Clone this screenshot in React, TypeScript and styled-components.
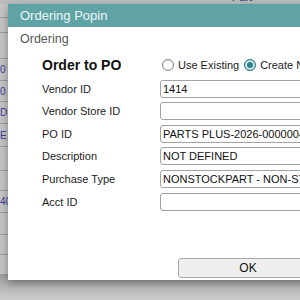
import React from "react";
import styled, { createGlobalStyle } from "styled-components";

const GlobalStyle = createGlobalStyle`
  html, body {
    margin: 0;
    padding: 0;
    overflow: hidden;
    font-family: "Liberation Sans", Arial, sans-serif;
  }
`;

const Page = styled.div`
  position: relative;
  width: 300px;
  height: 300px;
  overflow: hidden;
  background: #c6c6c6;
`;

const BackHeader = styled.div`
  height: 4px;
  overflow: hidden;
  position: relative;
  background: #bdbdbd;
`;

const BackHeaderText = styled.div`
  position: absolute;
  left: 232px;
  top: -9px;
  font-size: 11px;
  color: #2a2f6a;
`;

const BackTable = styled.div`
  display: flex;
  flex-direction: column;
`;

const BackRow = styled.div<{ h: number }>`
  height: ${(p) => p.h}px;
  border-bottom: 1px solid #9c9c9c;
  background: #c4c4c4;
  font-size: 10px;
  line-height: ${(p) => p.h}px;
  color: #3a3aa0;
  box-sizing: border-box;
`;

const BackFooter = styled.div`
  height: 40px;
  background: linear-gradient(#a0a0a0, #cbcbcb 60%, #cfcfcf);
`;

const Dialog = styled.div`
  position: absolute;
  left: 8px;
  top: 4px;
  width: 340px;
  height: 276px;
  background: #fff;
  border-radius: 2px 2px 0 0;
  box-shadow: 0 3px 8px rgba(0, 0, 0, 0.35);
  display: flex;
  flex-direction: column;
`;

const TitleBar = styled.div`
  height: 23px;
  background: #5fa3a5;
  border-top: 1px solid #4fa7ab;
  box-sizing: border-box;
  color: #eef6f6;
  font-size: 13px;
  line-height: 22px;
  padding-left: 12px;
`;

const Section = styled.div`
  font-size: 12.5px;
  color: #555;
  padding: 5px 0 0 12px;
  height: 18px;
`;

const Form = styled.div`
  display: grid;
  grid-template-columns: 118px 1fr;
  row-gap: 4.6px;
  padding: 5px 0 0 34px;
  align-items: center;
`;

const Heading = styled.div`
  font-size: 14px;
  font-weight: bold;
  color: #111;
  height: 20px;
  line-height: 20px;
`;

const RadioGroup = styled.div`
  display: flex;
  align-items: center;
  white-space: nowrap;
  font-size: 11px;
  color: #1c1c1c;
  padding-left: 2px;
`;

const RadioLabel = styled.label`
  display: flex;
  align-items: center;
  gap: 4px;
  margin-right: 5px;
`;

const RadioDot = styled.span<{ checked?: boolean }>`
  width: 12px;
  height: 12px;
  border-radius: 50%;
  box-sizing: border-box;
  border: 1px solid ${(p) => (p.checked ? "#2b7f86" : "#808080")};
  background: ${(p) => (p.checked ? "#2b7f86" : "#fff")};
  box-shadow: ${(p) =>
    p.checked ? "inset 0 0 0 2px #d8ecec" : "inset 0 1px 2px #ddd"};
`;

const Label = styled.div`
  font-size: 11px;
  color: #1c1c1c;
  height: 18px;
  line-height: 18px;
`;

const Field = styled.div`
  height: 18px;
  box-sizing: border-box;
  border: 1px solid #a3a3a3;
  border-radius: 3px;
  font-size: 11px;
  color: #111;
  line-height: 16px;
  padding-left: 2px;
  white-space: nowrap;
  overflow: hidden;
  width: 200px;
`;

const Footer = styled.div`
  margin-top: auto;
  padding: 0 0 2px 170px;
`;

const Button = styled.div`
  width: 140px;
  height: 20px;
  box-sizing: border-box;
  border: 1px solid #aaa;
  border-radius: 3px;
  background: #efefef;
  font-size: 12px;
  color: #111;
  text-align: center;
  line-height: 18px;
`;

const backRows = [
  { h: 14, t: "" },
  { h: 15, t: "" },
  { h: 26, t: "" },
  { h: 22, t: "0" },
  { h: 21, t: "0" },
  { h: 22, t: "D" },
  { h: 23, t: "E" },
  { h: 24, t: "" },
  { h: 20, t: "" },
  { h: 22, t: "40" },
  { h: 22, t: "" },
  { h: 20, t: "" },
  { h: 20, t: "" },
];

const fields = [
  { label: "Vendor ID", value: "1414" },
  { label: "Vendor Store ID", value: "" },
  { label: "PO ID", value: "PARTS PLUS-2026-0000004" },
  { label: "Description", value: "NOT DEFINED" },
  { label: "Purchase Type", value: "NONSTOCKPART - NON-STOCK" },
  { label: "Acct ID", value: "" },
];

export default function App() {
  return (
    <Page>
      <GlobalStyle />
      <BackHeader>
        <BackHeaderText>Part description:</BackHeaderText>
      </BackHeader>
      <BackTable>
        {backRows.map((r, i) => (
          <BackRow key={i} h={r.h}>
            {r.t}
          </BackRow>
        ))}
      </BackTable>
      <BackFooter />
      <Dialog>
        <TitleBar>Ordering Popin</TitleBar>
        <Section>Ordering</Section>
        <Form>
          <Heading>Order to PO</Heading>
          <RadioGroup>
            <RadioLabel>
              <RadioDot />
              Use Existing
            </RadioLabel>
            <RadioLabel>
              <RadioDot checked />
              Create New
            </RadioLabel>
          </RadioGroup>
          {fields.map((f) => (
            <React.Fragment key={f.label}>
              <Label>{f.label}</Label>
              <Field>{f.value}</Field>
            </React.Fragment>
          ))}
        </Form>
        <Footer>
          <Button>OK</Button>
        </Footer>
      </Dialog>
    </Page>
  );
}
